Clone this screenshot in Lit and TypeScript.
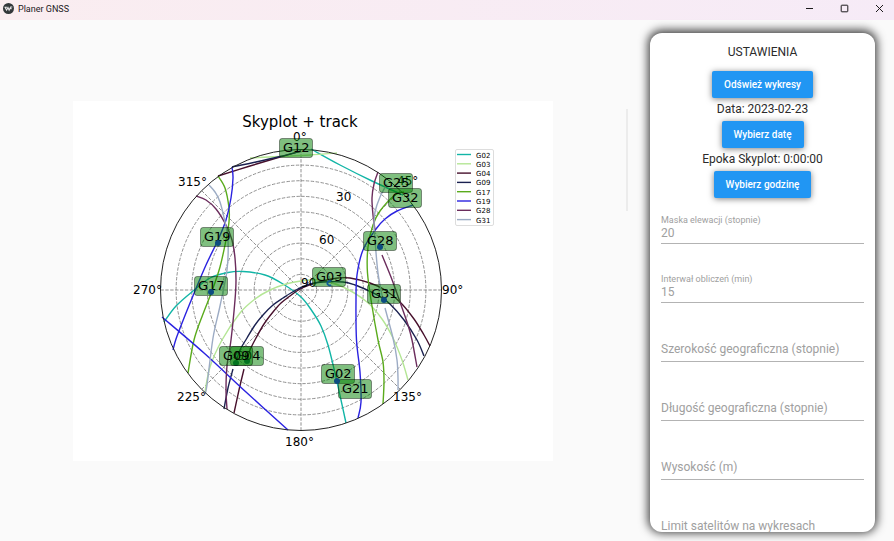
import { LitElement, html, svg, css, nothing } from "lit";
import { customElement, property } from "lit/decorators.js";

type Point = [number, number];

interface Track {
  color: string;
  points: Point[];
}

interface Tag {
  name: string;
  x: number;
  y: number;
}

const CENTER_X = 301;
const CENTER_Y = 290;
const RADIUS = 140.5;

const COLORS: Record<string, string> = {
  G02: "#12b5a6",
  G03: "#b4e695",
  G04: "#47102c",
  G09: "#1a2150",
  G17: "#5aab1c",
  G19: "#2a22e0",
  G28: "#6b2c5c",
  G31: "#9cabc4",
};

const TRACKS: Track[] = [
  { color: COLORS.G02, points: [[311, 149], [340, 165], [372, 181], [403, 195]] },
  { color: COLORS.G02, points: [[164, 322], [176, 306], [193, 291], [210, 278], [228, 272.5], [243, 271.5], [265, 275], [283, 284], [301, 297], [312, 311], [321, 326], [328, 345], [335, 373], [341, 400], [346, 423]] },
  { color: COLORS.G03, points: [[250, 158], [280, 156.5], [310, 155], [337, 153]] },
  { color: COLORS.G03, points: [[205, 392], [210, 367], [222, 340], [240, 313], [255, 299], [270, 290], [286, 284], [301, 281], [320, 280], [343, 287], [367, 302], [382, 319], [393, 338], [402, 360], [408, 380]] },
  { color: COLORS.G04, points: [[218, 176], [250, 166], [280, 157], [301, 151]] },
  { color: COLORS.G04, points: [[234, 413], [239, 390], [244, 369]] },
  { color: COLORS.G04, points: [[247, 361], [250, 350], [256, 338], [264, 324], [273, 312], [281, 303], [290, 296], [300, 289], [312, 284], [327, 280], [338, 278], [350, 278], [370, 283], [385, 290], [400, 302], [414, 319], [424, 335], [430, 346]] },
  { color: COLORS.G09, points: [[232, 167], [256, 162], [280, 156.5], [301, 151]] },
  { color: COLORS.G09, points: [[224, 409], [228, 388], [233, 369]] },
  { color: COLORS.G09, points: [[236, 362], [240, 350], [247, 338], [255, 325], [263, 315], [273, 305], [283, 298], [296, 290], [310, 284], [323, 282], [343, 282], [355, 285], [367, 290], [379, 296], [390, 304], [404, 320], [417, 340], [424, 356]] },
  { color: COLORS.G17, points: [[218, 176], [225, 188], [229, 208], [229, 222], [226, 240], [220, 267], [212, 291], [203, 314], [194, 340], [188, 373]] },
  { color: COLORS.G17, points: [[404, 192], [395, 195], [380, 211], [373, 225], [368, 247], [367.5, 273], [372, 306], [378, 340], [383, 362], [384, 382], [383, 404]] },
  { color: COLORS.G19, points: [[232, 167], [233, 178], [231, 198], [226, 220], [218, 240], [206, 265], [195, 291], [184, 318], [176, 339], [173, 350]] },
  { color: COLORS.G19, points: [[162, 317], [204, 353], [246, 392], [288, 430]] },
  { color: COLORS.G19, points: [[413, 205], [397, 211], [385, 219], [376, 229], [363, 250], [357, 275], [356, 300], [356.5, 340], [360, 372], [361, 402], [358, 418]] },
  { color: COLORS.G28, points: [[196, 196], [206, 200], [216, 209], [226, 225], [232, 240], [235, 258], [236, 280], [235, 300], [231, 340], [227, 366], [226, 390], [227, 409]] },
  { color: COLORS.G28, points: [[378, 172], [374, 184], [372, 198], [373, 215], [375, 230]] },
  { color: COLORS.G28, points: [[382, 255], [391, 277], [400, 302], [408, 325], [412, 340], [417, 367]] },
  { color: COLORS.G31, points: [[209, 185], [215, 192], [220, 202], [225, 222], [228, 240], [227, 270], [220, 306], [213, 338], [207, 385], [205, 394]] },
  { color: COLORS.G31, points: [[387, 184], [380, 197], [375, 212], [374, 226], [375, 240], [378, 273], [383, 300]] },
  { color: COLORS.G31, points: [[385, 308], [393, 338], [397, 360], [398, 378], [398, 390]] },
];

const TAGS: Tag[] = [
  { name: "G02", x: 321, y: 364 },
  { name: "G03", x: 312, y: 267 },
  { name: "G04", x: 230, y: 346 },
  { name: "G09", x: 219, y: 346 },
  { name: "G12", x: 279, y: 138 },
  { name: "G17", x: 194, y: 276 },
  { name: "G19", x: 200, y: 227 },
  { name: "G21", x: 338, y: 379 },
  { name: "G25", x: 379, y: 173 },
  { name: "G28", x: 363, y: 231 },
  { name: "G31", x: 367, y: 284 },
  { name: "G32", x: 388, y: 188 },
];

const MARKERS_BELOW: Point[] = [[236, 363], [247, 361]];
const MARKERS: Point[] = [[218, 243], [211, 292], [380, 247], [384, 300], [337, 381]];

const AXIS_LABELS: { text: string; x: number; y: number }[] = [
  { text: "0°", x: 293, y: 141 },
  { text: "45°", x: 397, y: 185 },
  { text: "90°", x: 442, y: 294 },
  { text: "135°", x: 393, y: 401 },
  { text: "180°", x: 285, y: 446 },
  { text: "225°", x: 177, y: 401 },
  { text: "270°", x: 133, y: 294 },
  { text: "315°", x: 178, y: 186 },
  { text: "30", x: 336, y: 201 },
  { text: "60", x: 319, y: 244 },
  { text: "90", x: 301, y: 287 },
];

/** Smooth path through all points (Catmull-Rom converted to cubic segments). */
function smoothPath(points: Point[]): string {
  let d = `M${points[0][0]} ${points[0][1]}`;
  for (let i = 0; i < points.length - 1; i++) {
    const p0 = points[Math.max(i - 1, 0)];
    const p1 = points[i];
    const p2 = points[i + 1];
    const p3 = points[Math.min(i + 2, points.length - 1)];
    const c1 = [p1[0] + (p2[0] - p0[0]) / 6, p1[1] + (p2[1] - p0[1]) / 6];
    const c2 = [p2[0] - (p3[0] - p1[0]) / 6, p2[1] - (p3[1] - p1[1]) / 6];
    d += `C${c1[0]} ${c1[1]} ${c2[0]} ${c2[1]} ${p2[0]} ${p2[1]}`;
  }
  return d;
}

@customElement("title-bar")
export class TitleBar extends LitElement {
  static styles = css`
    :host {
      display: flex;
      align-items: center;
      height: 20px;
      padding: 0 0 3px 3px;
      box-sizing: border-box;
      background: linear-gradient(90deg, #faedf0, #f6ebf7);
      font: 9px/16px Roboto, "Noto Sans", sans-serif;
      color: #1c1a1c;
    }
    .logo {
      width: 11px;
      height: 11px;
      margin-right: 4px;
    }
    .name {
      flex: 1;
    }
    .controls {
      display: flex;
      gap: 6px;
    }
    .control {
      display: grid;
      place-items: center;
      width: 29px;
      height: 16px;
      padding: 0;
      border: 0;
      background: none;
      color: #1c1a1c;
    }
    .glyph {
      width: 9px;
      height: 9px;
      fill: none;
      stroke: currentColor;
    }
  `;

  render() {
    return html`
      <svg class="logo" viewBox="0 0 11 11" aria-hidden="true">
        <circle cx="5.5" cy="5.5" r="5.5" fill="#33383a" />
        <path d="M1.8 3.8 3.6 7.2 5 4.6 6.1 7.2 7.6 4H9.3M2.6 4.2H4.2M7.3 5.6H8.6" fill="none" stroke="#e9e6e8" stroke-width="1.1" />
      </svg>
      <span class="name">Planer GNSS</span>
      <div class="controls">
        <button class="control" aria-label="Minimalizuj">
          <svg class="glyph" viewBox="0 0 9 9"><path d="M1 4.5H8" /></svg>
        </button>
        <button class="control" aria-label="Maksymalizuj">
          <svg class="glyph" viewBox="0 0 9 9"><rect x="1.2" y="1.2" width="6.6" height="6.6" rx="0.6" /></svg>
        </button>
        <button class="control" aria-label="Zamknij">
          <svg class="glyph" viewBox="0 0 9 9"><path d="M1 1 8 8M8 1 1 8" /></svg>
        </button>
      </div>
    `;
  }
}

@customElement("sky-plot")
export class SkyPlot extends LitElement {
  static styles = css`
    :host {
      display: block;
    }
    .figure {
      display: block;
      width: 100%;
      height: auto;
      background: #fff;
      font-family: "DejaVu Sans", sans-serif;
    }
    .title {
      font-size: 15px;
      text-anchor: middle;
    }
    .label {
      font-size: 12px;
    }
    .tag-label {
      font-size: 13px;
    }
    .legend-label {
      font-size: 7px;
    }
    .grid {
      fill: none;
      stroke: #858585;
      stroke-width: 0.9;
      stroke-dasharray: 3.4 1.5;
    }
    .rim {
      fill: none;
      stroke: #222;
      stroke-width: 1;
    }
    .track {
      fill: none;
      stroke-width: 1.4;
    }
    .marker {
      fill: #0c4c80;
    }
    .tag {
      fill: rgb(0 128 0 / 0.5);
      stroke: rgb(0 0 0 / 0.5);
      stroke-width: 0.8;
    }
    .legend {
      fill: #fff;
      stroke: #d4d4d4;
      stroke-width: 0.8;
    }
  `;

  private dot([x, y]: Point) {
    return svg`<circle class="marker" cx=${x} cy=${y} r="3" />`;
  }

  render() {
    const rings = Array.from({ length: 8 }, (_, i) => ((i + 1) * RADIUS) / 9);
    const spokes = Array.from({ length: 8 }, (_, i) => (i * Math.PI) / 4);
    return html`
      <svg class="figure" viewBox="73 101 480 360" role="img" aria-label="Skyplot + track">
        <text class="title" x="300" y="127">Skyplot + track</text>
        ${rings.map((r) => svg`<circle class="grid" cx=${CENTER_X} cy=${CENTER_Y} r=${r} />`)}
        ${spokes.map(
          (a) => svg`<line class="grid" x1=${CENTER_X} y1=${CENTER_Y}
            x2=${CENTER_X + RADIUS * Math.sin(a)} y2=${CENTER_Y - RADIUS * Math.cos(a)} />`
        )}
        ${TRACKS.map((t) => svg`<path class="track" stroke=${t.color} d=${smoothPath(t.points)} />`)}
        <circle class="rim" cx=${CENTER_X} cy=${CENTER_Y} r=${RADIUS} />
        ${AXIS_LABELS.map((l) => svg`<text class="label" x=${l.x} y=${l.y}>${l.text}</text>`)}
        ${MARKERS_BELOW.map((m) => this.dot(m))}
        ${TAGS.map(
          (t) => svg`
            <rect class="tag" x=${t.x + 0.5} y=${t.y + 0.5} width="33" height="19" rx="2.5" />
            <text class="tag-label" x=${t.x + 4} y=${t.y + 14}>${t.name}</text>`
        )}
        ${MARKERS.map((m) => this.dot(m))}
        <path d="M331 281.5A2.2 2.2 0 1 0 331 285" fill="none" stroke="#0f5a96" stroke-width="1.8" />
        <rect class="legend" x="455.5" y="149.5" width="38" height="76" rx="1.5" />
        ${Object.entries(COLORS).map(([name, color], i) => {
          const y = 154.5 + i * 9.3;
          return svg`
            <line class="track" stroke=${color} x1="457" y1=${y} x2="471" y2=${y} />
            <text class="legend-label" x="476" y=${y + 3}>${name}</text>`;
        })}
      </svg>
    `;
  }
}

@customElement("line-field")
export class LineField extends LitElement {
  @property() label = "";
  @property() value = "";

  static styles = css`
    .field {
      display: grid;
      grid-template-rows: 12px 17px;
      border-bottom: 1px solid #b3b3b3;
      color: #a0a0a0;
      font-family: Roboto, sans-serif;
    }
    .label {
      grid-area: 1 / 1;
      font-size: 9px;
      line-height: 12px;
      white-space: nowrap;
    }
    .input {
      grid-area: 2 / 1;
      width: 100%;
      min-width: 0;
      box-sizing: border-box;
      padding: 0 0 2px;
      border: 0;
      outline: 0;
      background: none;
      color: inherit;
      font: 12px/15px Roboto, sans-serif;
    }
    .empty .label {
      grid-row: 1 / 3;
      align-self: center;
      padding-top: 4px;
      font-size: 12px;
      line-height: 16px;
    }
  `;

  render() {
    return html`
      <div class="field ${this.value ? "" : "empty"}">
        <label class="label" for="input">${this.label}</label>
        <input class="input" id="input" type="text" .value=${this.value} />
      </div>
    `;
  }
}

@customElement("settings-card")
export class SettingsCard extends LitElement {
  static styles = css`
    :host {
      display: block;
      min-height: 0;
      border-radius: 12px;
      box-shadow: 0 -1px 10px 2px rgb(0 0 0 / 0.75);
      background: #fff;
      font: 12px/23px Roboto, sans-serif;
      color: #2b2b2b;
    }
    .scroller {
      height: 100%;
      box-sizing: border-box;
      padding: 11px;
      border-radius: inherit;
      overflow-y: auto;
      scrollbar-width: none;
    }
    .actions {
      display: flex;
      flex-direction: column;
      align-items: center;
    }
    .heading {
      margin: 0 0 11px;
      font-size: 12px;
      font-weight: 400;
      line-height: 16px;
    }
    .action {
      height: 27px;
      padding: 0 12px;
      border: 0;
      border-radius: 2px;
      background: #2196f3;
      box-shadow: 0 1px 6px rgb(0 0 0 / 0.5);
      color: #fff;
      font: 500 10px/27px Roboto, sans-serif;
    }
    .fields {
      display: flex;
      flex-direction: column;
      gap: 29px;
      margin-top: 16px;
    }
  `;

  private fields = [
    { label: "Maska elewacji (stopnie)", value: "20" },
    { label: "Interwał obliczeń (min)", value: "15" },
    { label: "Szerokość geograficzna (stopnie)", value: "" },
    { label: "Długość geograficzna (stopnie)", value: "" },
    { label: "Wysokość (m)", value: "" },
    { label: "Limit satelitów na wykresach", value: "" },
  ];

  render() {
    return html`
      <div class="scroller">
        <div class="actions">
          <h2 class="heading">USTAWIENIA</h2>
          <button class="action">Odśwież wykresy</button>
          <span>Data: 2023-02-23</span>
          <button class="action">Wybierz datę</button>
          <span>Epoka Skyplot: 0:00:00</span>
          <button class="action">Wybierz godzinę</button>
        </div>
        <div class="fields">
          ${this.fields.map((f) => html`<line-field label=${f.label} value=${f.value || nothing}></line-field>`)}
        </div>
      </div>
    `;
  }
}

@customElement("app-root")
export class AppRoot extends LitElement {
  static styles = css`
    :host {
      display: grid;
      grid-template-rows: auto minmax(0, 1fr);
      height: 100vh;
      overflow: hidden;
      background: #fafafa;
    }
    .content {
      display: grid;
      grid-template-columns: minmax(0, 1fr) 225px;
      gap: 22px;
      padding-right: 19px;
      min-height: 0;
    }
    .charts {
      display: flex;
      align-items: center;
      min-width: 0;
    }
    .plot {
      flex: 0 1 480px;
      min-width: 0;
      margin: 0 auto;
    }
    .thumb {
      align-self: flex-start;
      width: 2px;
      height: 102px;
      margin-top: 89px;
      background: #ececec;
    }
    .settings {
      margin: 13px 0 9px;
    }
  `;

  render() {
    return html`
      <title-bar></title-bar>
      <main class="content">
        <section class="charts">
          <sky-plot class="plot"></sky-plot>
          <div class="thumb"></div>
        </section>
        <settings-card class="settings"></settings-card>
      </main>
    `;
  }
}
